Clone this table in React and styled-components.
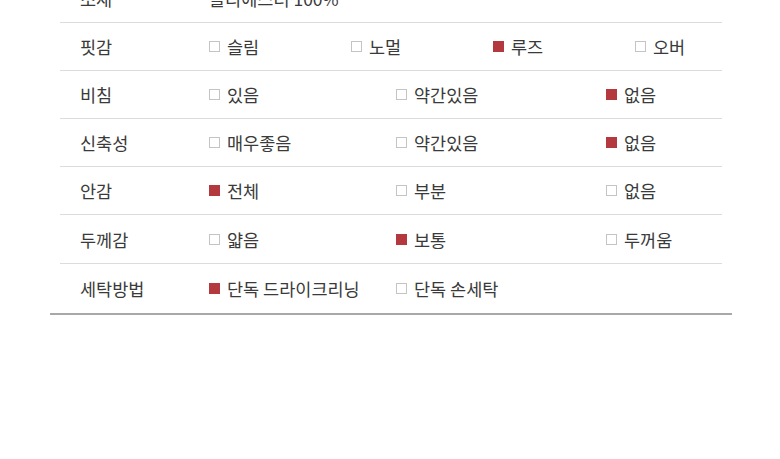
import React from 'react';
import styled, { createGlobalStyle } from 'styled-components';

const GlobalStyle = createGlobalStyle`
  html, body {
    margin: 0;
    padding: 0;
    background: #fff;
    font-family: "Noto Sans CJK KR", "Noto Sans", sans-serif;
  }
`;

// TABLE STYLES
const Table = styled.div`
  width: 682px;
  margin: -25px 0 0 50px;
  border-bottom: 2px solid #a8a8a8;
`;

const Row = styled.div`
  display: grid;
  grid-template-columns: 149px 1fr;
  align-items: center;
  box-sizing: border-box;
  height: ${(props) => props.h || '48px'};
  margin: 0 10px;
  border-bottom: ${(props) => (props.last ? 'none' : '1px solid #dcdcdc')};
  color: #3a3a3a;
  font-size: 17.5px;
`;

const Label = styled.div`
  padding-left: 20px;
`;

const Options = styled.div`
  display: grid;
  grid-template-columns: ${(props) => props.cols};
  align-items: center;
`;

const Option = styled.div`
  display: flex;
  align-items: center;
  gap: 7px;
  white-space: nowrap;
`;

const Box = styled.span`
  width: 11px;
  height: 11px;
  box-sizing: border-box;
  flex-shrink: 0;
  background: ${(props) => (props.checked ? '#b3393f' : '#fff')};
  border: 1px solid ${(props) => (props.checked ? '#b3393f' : '#c4c4c4')};
`;

const rows = [
  { label: '핏감', cols: '142px 142px 142px 1fr', items: [['슬림'], ['노멀'], ['루즈', true], ['오버']] },
  { label: '비침', cols: '187px 210px 1fr', items: [['있음'], ['약간있음'], ['없음', true]] },
  { label: '신축성', cols: '187px 210px 1fr', items: [['매우좋음'], ['약간있음'], ['없음', true]] },
  { label: '안감', cols: '187px 210px 1fr', items: [['전체', true], ['부분'], ['없음']] },
  { label: '두께감', h: '49px', cols: '187px 210px 1fr', items: [['얇음'], ['보통', true], ['두꺼움']] },
  { label: '세탁방법', h: '49px', cols: '187px 1fr', items: [['단독 드라이크리닝', true], ['단독 손세탁']] },
];

const App = () => {
  return (
    <>
      <GlobalStyle />
      <Table>
        <Row>
          <Label>소재</Label>
          <Options cols="1fr">
            <Option>폴리에스터 100%</Option>
          </Options>
        </Row>
        {rows.map((row, i) => (
          <Row key={row.label} h={row.h} last={i === rows.length - 1}>
            <Label>{row.label}</Label>
            <Options cols={row.cols}>
              {row.items.map(([text, checked]) => (
                <Option key={text}>
                  <Box checked={checked} />
                  {text}
                </Option>
              ))}
            </Options>
          </Row>
        ))}
      </Table>
    </>
  );
};

export default App;
